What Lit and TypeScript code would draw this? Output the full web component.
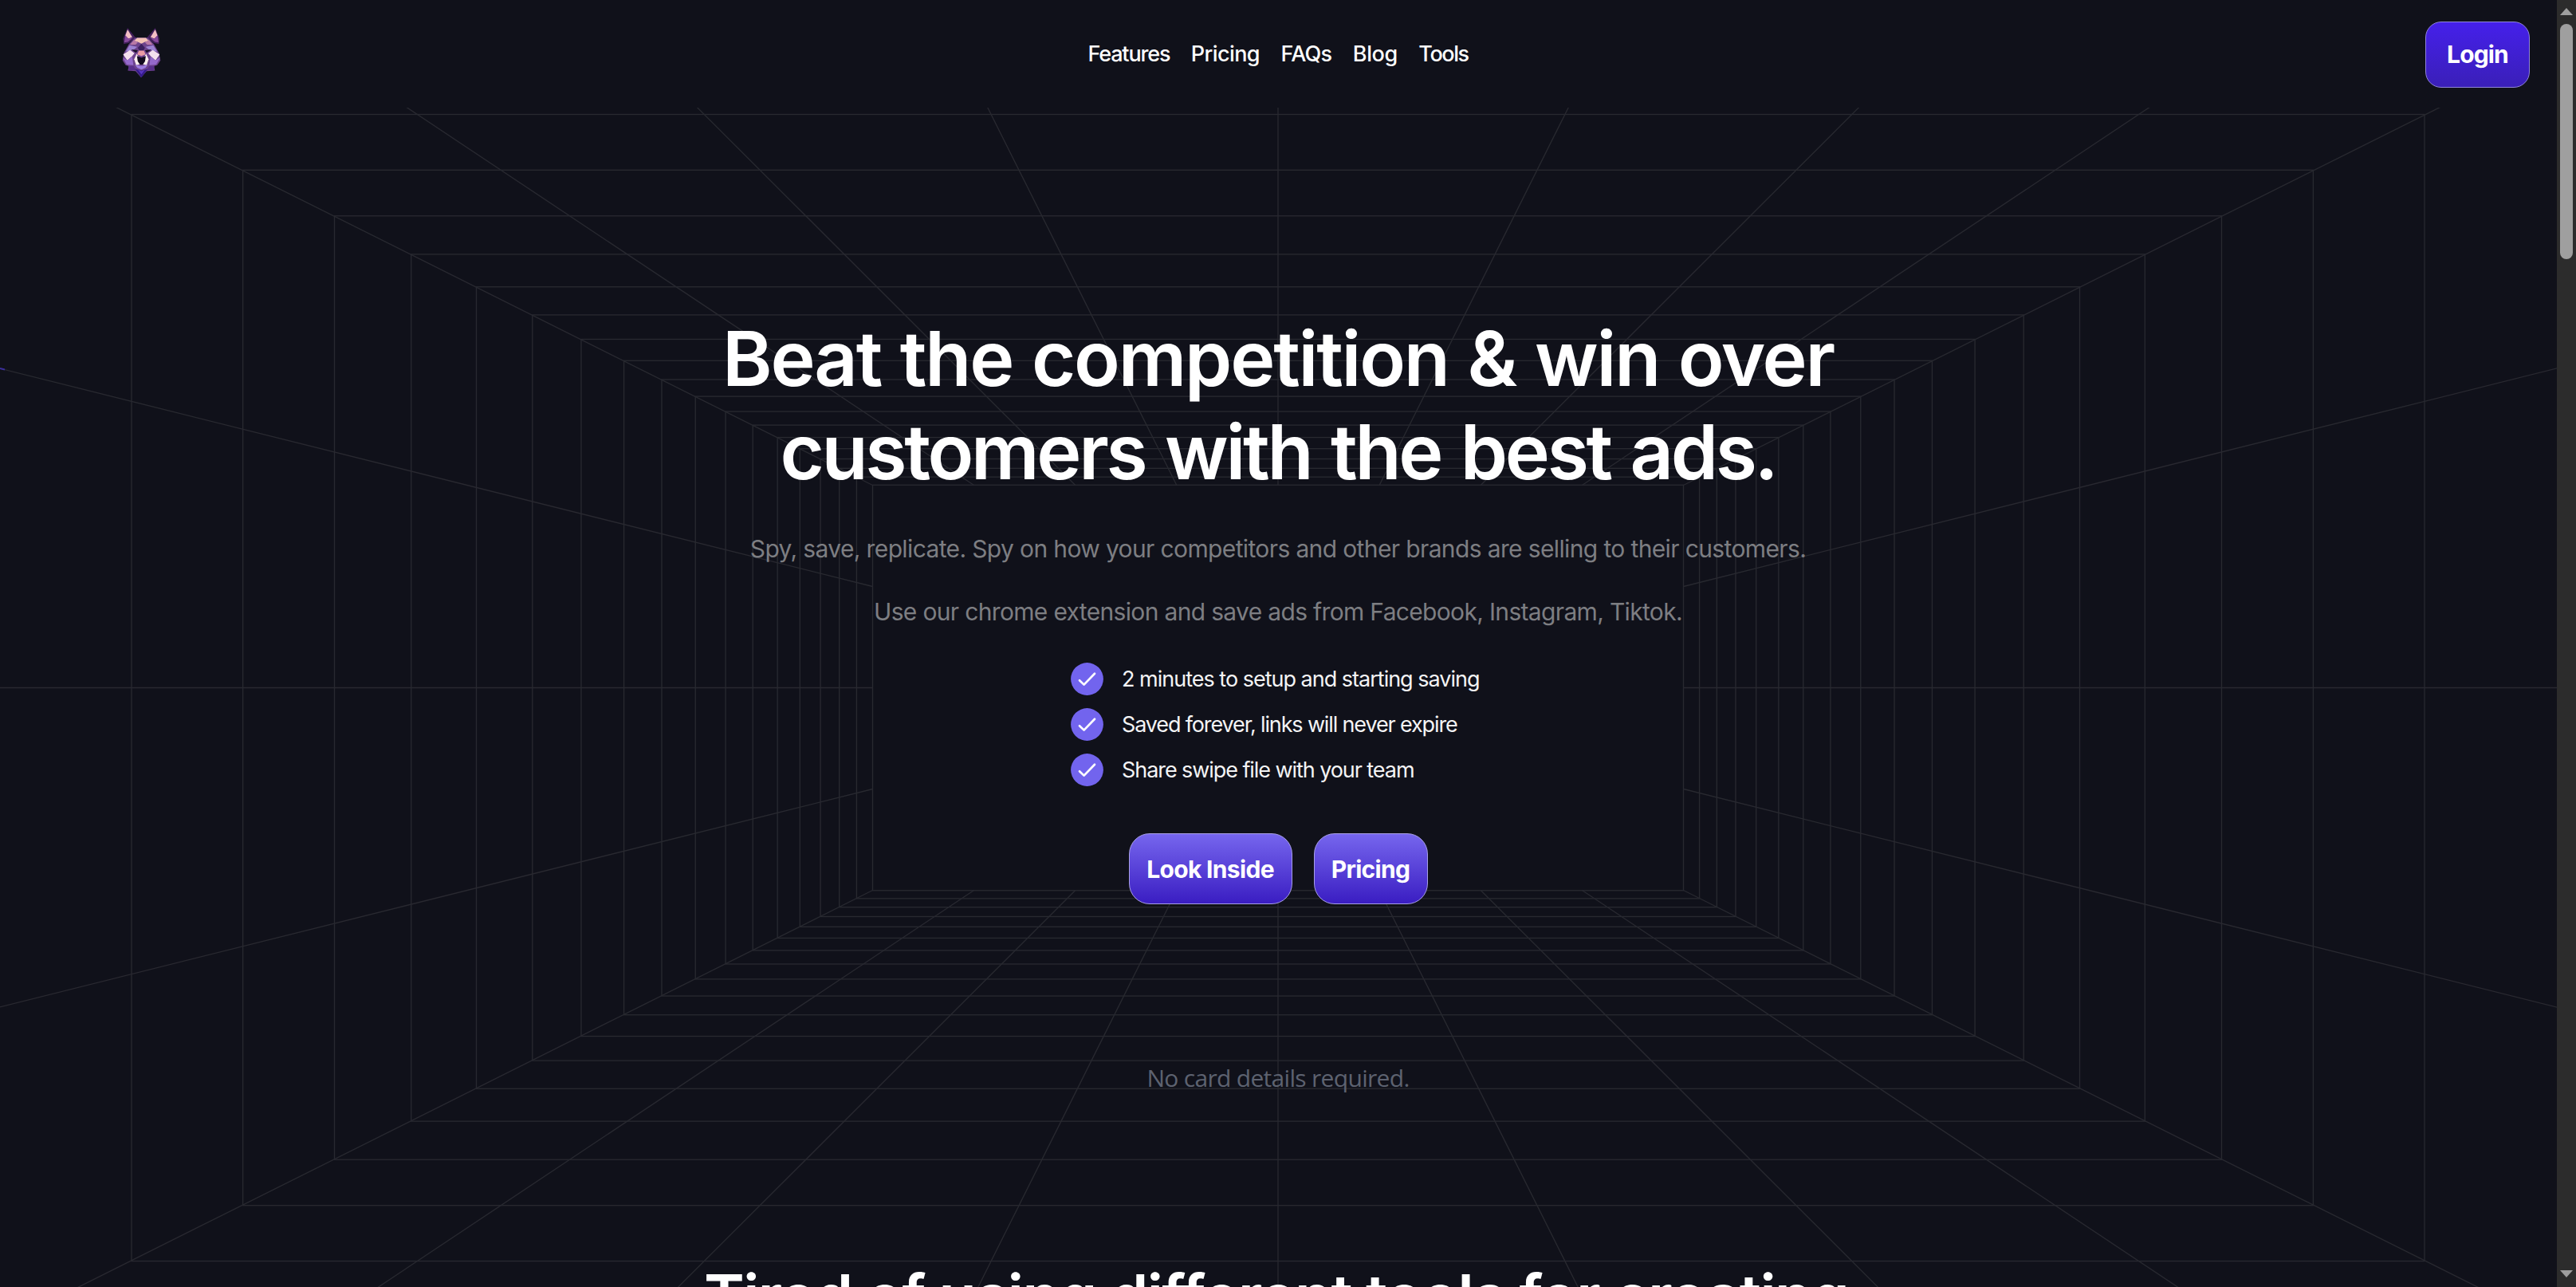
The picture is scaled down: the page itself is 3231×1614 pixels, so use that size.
import { LitElement, html, css, svg } from "lit";
import { customElement, property } from "lit/decorators.js";

/* Perspective room: nested frames receding to a back wall, plus rays from its edges. */
const CX = 1603;
const CY = 727.5;
const BACK = { w: 508.5, h: 254 };
const FRAMES = Array.from({ length: 18 }, (_, k) => 1 / (6.954e-4 + k * 0.7478e-4));

@customElement("perspective-grid")
export class PerspectiveGrid extends LitElement {
  static styles = css`
    :host { display: block; }
    svg { display: block; width: 100%; height: 100%; }
    .line { fill: none; stroke: #282930; stroke-width: 1.35; }
    .spark { stroke: #3a2f9c; stroke-width: 2; }
  `;

  private ray(dx: number, dy: number) {
    const far = 4;
    return svg`<line class="line" x1=${CX + dx} y1=${CY + dy} x2=${CX + dx * far} y2=${CY + dy * far}></line>`;
  }

  render() {
    const rays = [];
    for (let i = -4; i <= 4; i++) {
      rays.push(this.ray((i * BACK.w) / 4, -BACK.h), this.ray((i * BACK.w) / 4, BACK.h));
    }
    for (let i = -1; i <= 1; i++) {
      rays.push(this.ray(-BACK.w, (i * BACK.h) / 2), this.ray(BACK.w, (i * BACK.h) / 2));
    }
    return html`
      <svg viewBox="0 0 3207 1479" preserveAspectRatio="xMidYMin slice">
        ${FRAMES.map((w) => svg`<rect class="line" x=${CX - w} y=${CY - w / 2} width=${2 * w} height=${w}></rect>`)}
        ${rays}
        <line class="spark" x1="0" y1="327" x2="6" y2="328.5"></line>
      </svg>
    `;
  }
}

@customElement("wolf-logo")
export class WolfLogo extends LitElement {
  static styles = css`
    :host { display: block; width: 50px; height: 65px; }
    svg { display: block; width: 100%; height: 100%; filter: blur(0.7px); }
  `;
  render() {
    return html`
      <svg viewBox="68 45 144 192" preserveAspectRatio="none">
        <path fill="#43205c" d="M91 48 75 88 77 108 96 104 120 84Z" />
        <path fill="#f3bfc4" d="M91 54 83 76 94 88 108 82Z" />
        <path fill="#85489c" d="M83 76 79 102 92 100 110 84 94 88Z" />
        <path fill="#43205c" d="M191 48 206 88 204 108 186 104 161 84Z" />
        <path fill="#f3bfc4" d="M191 54 199 76 188 88 174 82Z" />
        <path fill="#85489c" d="M199 76 203 102 190 100 172 84 188 88Z" />
        <path fill="#6d438c" d="M118 84H164L186 108 204 140 210 168 198 186 186 190 190 206 160 208 140 232 120 208 92 206 96 190 84 186 73 168 78 140 96 108Z" />
        <path fill="#f4c3b6" d="M126 85H157L168 96 154 100 141 106 128 100 114 96Z" />
        <path fill="#b97aa6" d="M114 92 128 102 120 110 100 110Z M168 92 154 102 162 110 182 110Z" />
        <path fill="#3a1f5e" d="M141 106 154 122 148 132H134L128 122Z" />
        <path fill="#9b82d2" d="M98 112 126 118 112 130 84 136Z" />
        <path fill="#9b82d2" d="M184 112 156 118 170 130 198 136Z" />
        <path fill="#1c1028" d="M104 128 128 131 122 140Z M178 128 154 131 160 140Z" />
        <path fill="#f4dfee" d="M75 146 100 130 116 142 108 152 90 168Z" />
        <path fill="#f4dfee" d="M207 146 182 130 166 142 174 152 192 168Z" />
        <path fill="#9569cc" d="M74 158 90 168 108 154 112 186 88 184Z" />
        <path fill="#9569cc" d="M209 158 192 168 174 154 170 186 194 184Z" />
        <path fill="#ea9ba4" d="M132 132H150L156 146 141 152 126 146Z" />
        <path fill="#fff0ef" d="M124 144 132 158 137 182 122 186 115 164Z" />
        <path fill="#fff0ef" d="M158 144 150 158 145 182 160 186 167 164Z" />
        <path fill="#120b1e" d="M125 152 141 158 157 152 154 172 146 184H136L128 172Z" />
        <path fill="#9c7be0" d="M118 184 136 188H146L164 184 156 196 141 202 126 196Z" />
        <path fill="#5a2f8c" d="M94 190 112 188 122 204 96 206Z M188 190 170 188 160 204 186 206Z" />
        <path fill="#351b8c" d="M118 200 141 206 164 200 141 232Z" />
        <path fill="#5a36c0" d="M128 202 141 208 154 202 141 220Z" />
      </svg>
    `;
  }
}

@customElement("check-item")
export class CheckItem extends LitElement {
  @property() label = "";
  static styles = css`
    :host { display: flex; align-items: center; gap: 23px; }
    svg { display: block; width: 41px; height: 41px; flex: none; }
    .label { color: #f4f4f5; font-size: 27px; line-height: 41px; white-space: nowrap; letter-spacing: var(--track, -1.05px); }
  `;
  render() {
    return html`
      <svg viewBox="0 0 41 41">
        <circle cx="20.5" cy="20.5" r="20.4" fill="#7264ee" />
        <path d="M11 22.2 16.6 27.6 30 13.8" fill="none" stroke="#fff" stroke-width="2.7" stroke-linecap="round" stroke-linejoin="round" />
      </svg>
      <span class="label">${this.label}</span>
    `;
  }
}

@customElement("page-scrollbar")
export class PageScrollbar extends LitElement {
  static styles = css`
    :host { display: flex; flex-direction: column; align-items: center; width: 24px; box-sizing: border-box; padding: 10px 0 12px; background: #2c2c2c; }
    .arrow { width: 16px; height: 9px; background: #9f9f9f; flex: none; }
    .up { clip-path: polygon(50% 0, 100% 100%, 0 100%); }
    .down { clip-path: polygon(0 0, 100% 0, 50% 100%); margin-top: auto; }
    .thumb { width: 16px; height: 295px; margin-top: 11px; border-radius: 8px; background: #9f9f9f; }
  `;
  render() {
    return html`<div class="arrow up"></div><div class="thumb"></div><div class="arrow down"></div>`;
  }
}

@customElement("app-root")
export class AppRoot extends LitElement {
  static styles = css`
    :host { display: flex; width: 3231px; height: 1614px; overflow: hidden; background: #10111a; color: #fff; font-family: Inter, "Liberation Sans", sans-serif; }
    .page { width: 3207px; flex: none; display: flex; flex-direction: column; overflow: hidden; }
    header { height: 135px; flex: none; box-sizing: border-box; padding: 1px 34px 0 152px; display: grid; grid-template-columns: 1fr auto 1fr; align-items: center; }
    wolf-logo { margin-top: -4px; }
    nav { display: flex; gap: 26.5px; font-size: 27px; font-weight: 500; line-height: 40px; margin-left: -119px; }
    .w0 { letter-spacing: -1.15px; }
    .w1 { letter-spacing: -0.6px; }
    .w2 { letter-spacing: -0.75px; }
    .w3 { letter-spacing: -0.4px; }
    .w4 { letter-spacing: -1.45px; }
    .btn { box-sizing: border-box; display: flex; align-items: center; justify-content: center; border: 1.5px solid #a79fe6; font-weight: 700; font-size: 30px; letter-spacing: -0.67px; white-space: nowrap; }
    .login { justify-self: end; width: 131px; height: 83px; border-radius: 20px; background: linear-gradient(#4520ea, #3a1fb8); letter-spacing: -0.86px; border-color: #8f84dc; }
    .hero { flex: none; height: 1479px; position: relative; overflow: hidden; }
    .backdrop { position: absolute; inset: 0; }
    .content { position: relative; display: flex; flex-direction: column; align-items: center; padding-top: 256px; width: 3206px; }
    h1, h2, p { margin: 0; padding: 0; }
    h1 { font-size: 95px; line-height: 117.4px; font-weight: 600; text-align: center; letter-spacing: -2.2px; word-spacing: 2px; white-space: nowrap; }
    .second { letter-spacing: -3.3px; word-spacing: 4px; }
    .lead { color: #7d7e82; font-size: 30px; line-height: 40px; letter-spacing: -0.63px; margin-top: 42px; white-space: nowrap; }
    .lead + .lead { margin-top: 39px; letter-spacing: -0.67px; }
    .checks { display: flex; flex-direction: column; gap: 16.2px; width: 520px; margin-top: 44px; }
    .c0 { --track: -1px; }
    .c1 { --track: -1.14px; }
    .c2 { --track: -1.07px; }
    .actions { display: flex; gap: 27px; margin-top: 59px; }
    .cta { height: 89px; border-radius: 26px; background: linear-gradient(#7666ee, #3a1dc2); }
    .inside { width: 205px; }
    .pricing { width: 143px; }
    .note { font-family: "Open Sans", "Noto Sans", sans-serif; font-size: 30px; line-height: 40px; letter-spacing: -0.69px; color: #5d6270; margin-top: 198px; }
    h2 { font-size: 77px; line-height: 92px; font-weight: 600; letter-spacing: -1.6px; margin: 208px 5px 0 0; white-space: nowrap; }
  `;

  render() {
    const links = ["Features", "Pricing", "FAQs", "Blog", "Tools"];
    const perks = ["2 minutes to setup and starting saving", "Saved forever, links will never expire", "Share swipe file with your team"];
    return html`
      <div class="page">
        <header>
          <wolf-logo></wolf-logo>
          <nav>${links.map((l, i) => html`<span class="w${i}">${l}</span>`)}</nav>
          <div class="btn login">Login</div>
        </header>
        <section class="hero">
          <perspective-grid class="backdrop"></perspective-grid>
          <div class="content">
            <h1>Beat the competition &amp; win over<br /><span class="second">customers with the best ads.</span></h1>
            <p class="lead">Spy, save, replicate. Spy on how your competitors and other brands are selling to their customers.</p>
            <p class="lead">Use our chrome extension and save ads from Facebook, Instagram, Tiktok.</p>
            <div class="checks">${perks.map((p, i) => html`<check-item class="c${i}" label=${p}></check-item>`)}</div>
            <div class="actions">
              <div class="btn cta inside">Look Inside</div>
              <div class="btn cta pricing">Pricing</div>
            </div>
            <p class="note">No card details required.</p>
            <h2>Tired of using different tools for creating</h2>
          </div>
        </section>
      </div>
      <page-scrollbar></page-scrollbar>
    `;
  }
}
